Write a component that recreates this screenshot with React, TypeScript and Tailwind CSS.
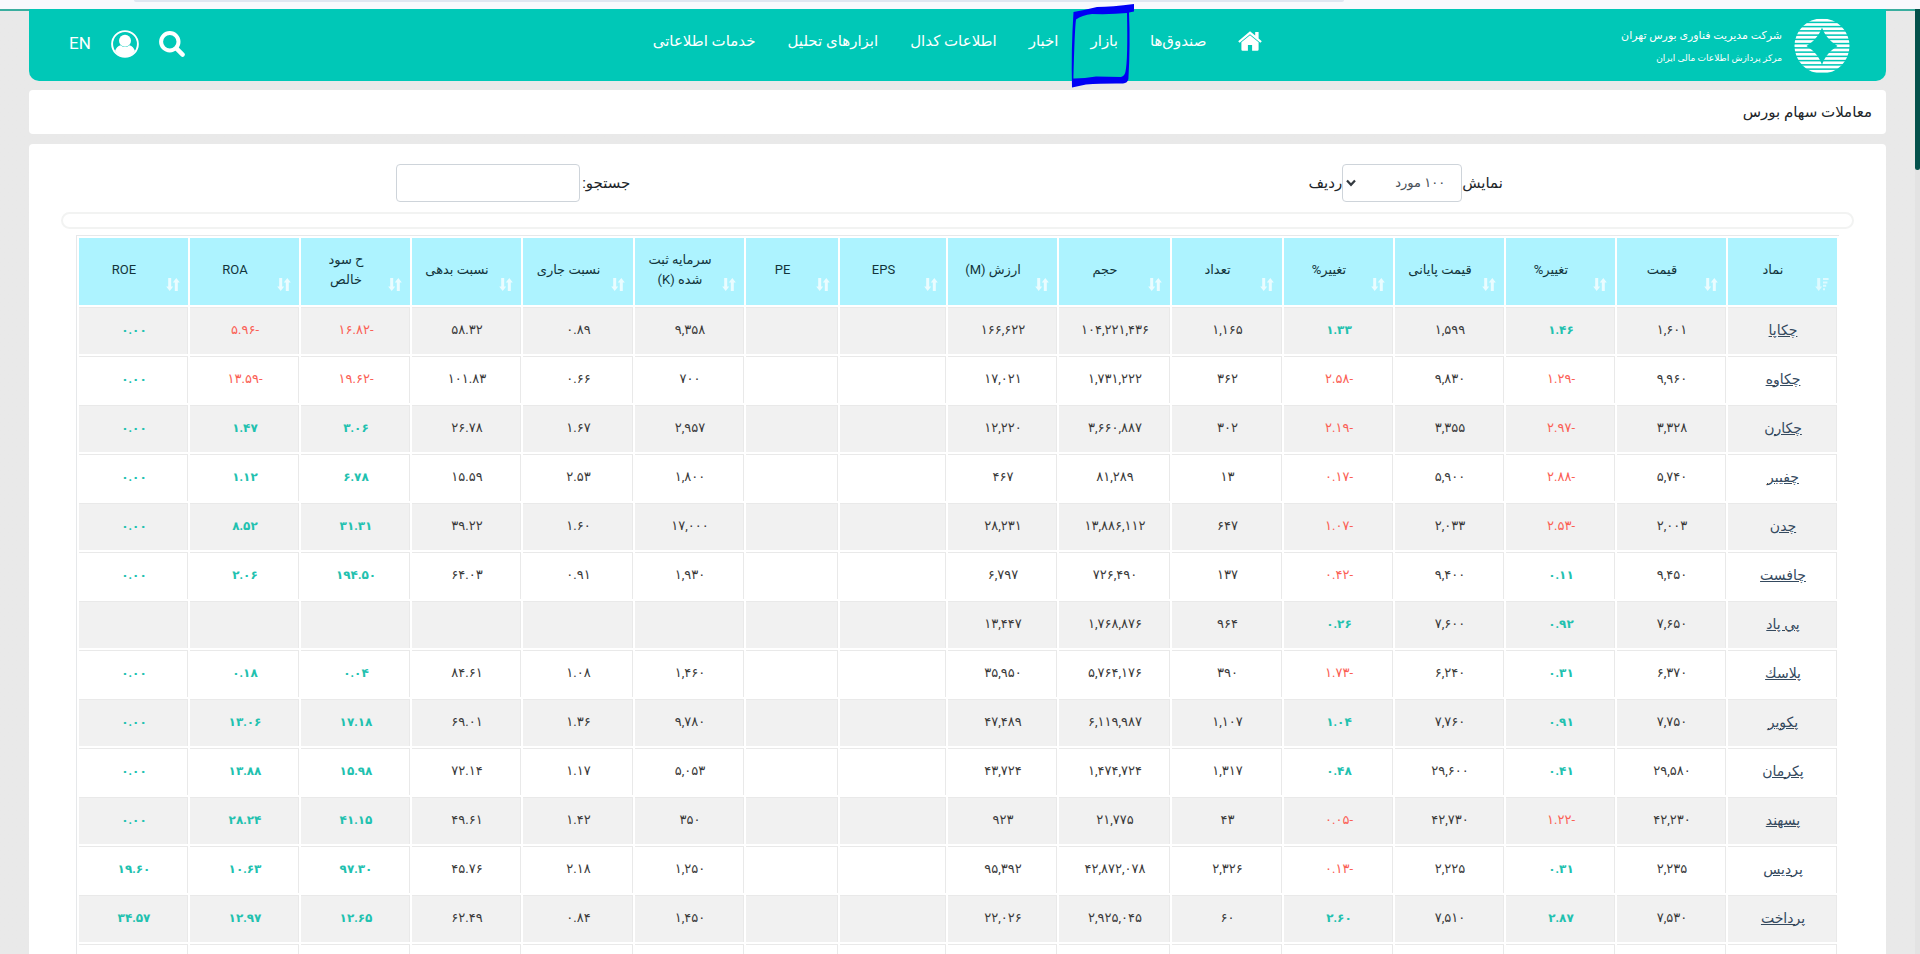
import React from "react";

type Column = { label: string; width: number };

const columns: Column[] = [
  { label: "نماد", width: 109 },
  { label: "قیمت", width: 109 },
  { label: "تغییر%", width: 109 },
  { label: "قیمت پایانی", width: 109 },
  { label: "تغییر%", width: 109 },
  { label: "تعداد", width: 110 },
  { label: "حجم", width: 111 },
  { label: "ارزش (M)", width: 109 },
  { label: "EPS", width: 106 },
  { label: "PE", width: 92 },
  { label: "سرمایه ثبت شده (K)", width: 109 },
  { label: "نسبت جاری", width: 110 },
  { label: "نسبت بدهی", width: 109 },
  { label: "ح سود خالص", width: 109 },
  { label: "ROA", width: 109 },
  { label: "ROE", width: 109 },
];

/** Columns whose values are coloured by sign. */
const signed = new Set([2, 4, 13, 14, 15]);

const rows: string[][] = [
  ["چکاپا", "۱,۶۰۱", "۱.۴۶", "۱,۵۹۹", "۱.۳۳", "۱,۱۶۵", "۱۰۴,۲۲۱,۴۳۶", "۱۶۶,۶۲۲", "", "", "۹,۳۵۸", "۰.۸۹", "۵۸.۳۲", "-۱۶.۸۲", "-۵.۹۶", "۰.۰۰"],
  ["چکاوه", "۹,۹۶۰", "-۱.۲۹", "۹,۸۳۰", "-۲.۵۸", "۳۶۲", "۱,۷۳۱,۲۲۲", "۱۷,۰۲۱", "", "", "۷۰۰", "۰.۶۶", "۱۰۱.۸۳", "-۱۹.۶۲", "-۱۳.۵۹", "۰.۰۰"],
  ["چکارن", "۳,۳۲۸", "-۲.۹۷", "۳,۳۵۵", "-۲.۱۹", "۳۰۲", "۳,۶۶۰,۸۸۷", "۱۲,۲۲۰", "", "", "۲,۹۵۷", "۱.۶۷", "۲۶.۷۸", "۳.۰۶", "۱.۴۷", "۰.۰۰"],
  ["چفیبر", "۵,۷۴۰", "-۲.۸۸", "۵,۹۰۰", "-۰.۱۷", "۱۳", "۸۱,۲۸۹", "۴۶۷", "", "", "۱,۸۰۰", "۲.۵۳", "۱۵.۵۹", "۶.۷۸", "۱.۱۲", "۰.۰۰"],
  ["چدن", "۲,۰۰۳", "-۲.۵۳", "۲,۰۳۳", "-۱.۰۷", "۶۴۷", "۱۳,۸۸۶,۱۱۲", "۲۸,۲۳۱", "", "", "۱۷,۰۰۰", "۱.۶۰", "۳۹.۲۲", "۳۱.۳۱", "۸.۵۲", "۰.۰۰"],
  ["چافست", "۹,۴۵۰", "۰.۱۱", "۹,۴۰۰", "-۰.۴۲", "۱۳۷", "۷۲۶,۴۹۰", "۶,۷۹۷", "", "", "۱,۹۳۰", "۰.۹۱", "۶۴.۰۳", "۱۹۴.۵۰", "۲.۰۶", "۰.۰۰"],
  ["پي پاد", "۷,۶۵۰", "۰.۹۲", "۷,۶۰۰", "۰.۲۶", "۹۶۴", "۱,۷۶۸,۸۷۶", "۱۳,۴۴۷", "", "", "", "", "", "", "", ""],
  ["پلاسك", "۶,۳۷۰", "۰.۳۱", "۶,۲۴۰", "-۱.۷۳", "۳۹۰", "۵,۷۶۴,۱۷۶", "۳۵,۹۵۰", "", "", "۱,۴۶۰", "۱.۰۸", "۸۴.۶۱", "۰.۰۴", "۰.۱۸", "۰.۰۰"],
  ["پکویر", "۷,۷۵۰", "۰.۹۱", "۷,۷۶۰", "۱.۰۴", "۱,۱۰۷", "۶,۱۱۹,۹۸۷", "۴۷,۴۸۹", "", "", "۹,۷۸۰", "۱.۳۶", "۶۹.۰۱", "۱۷.۱۸", "۱۳.۰۶", "۰.۰۰"],
  ["پکرمان", "۲۹,۵۸۰", "۰.۴۱", "۲۹,۶۰۰", "۰.۴۸", "۱,۳۱۷", "۱,۴۷۴,۷۲۴", "۴۳,۷۲۴", "", "", "۵,۰۵۳", "۱.۱۷", "۷۲.۱۴", "۱۵.۹۸", "۱۳.۸۸", "۰.۰۰"],
  ["پسهند", "۴۲,۲۳۰", "-۱.۲۲", "۴۲,۷۳۰", "-۰.۰۵", "۴۳", "۲۱,۷۷۵", "۹۲۳", "", "", "۳۵۰", "۱.۴۲", "۴۹.۶۱", "۴۱.۱۵", "۲۸.۲۴", "۰.۰۰"],
  ["پردیس", "۲,۲۳۵", "۰.۳۱", "۲,۲۲۵", "-۰.۱۳", "۲,۳۲۶", "۴۲,۸۷۲,۰۷۸", "۹۵,۳۹۲", "", "", "۱,۲۵۰", "۲.۱۸", "۴۵.۷۶", "۹۷.۳۰", "۱۰.۶۳", "۱۹.۶۰"],
  ["پرداخت", "۷,۵۳۰", "۲.۸۷", "۷,۵۱۰", "۲.۶۰", "۶۰", "۲,۹۲۵,۰۴۵", "۲۲,۰۲۶", "", "", "۱,۴۵۰", "۰.۸۴", "۶۲.۴۹", "۱۲.۶۵", "۱۲.۹۷", "۳۴.۵۷"],
  ["", "", "", "", "", "", "", "", "", "", "", "", "", "", "", ""],
];

const navItems = ["صندوق‌ها", "بازار", "اخبار", "اطلاعات کدال", "ابزارهای تحلیل", "خدمات اطلاعاتی"];

function Logo() {
  const stripes = Array.from({ length: 13 }, (_, i) => i);
  return (
    <svg viewBox="0 0 56 56" className="size-14 shrink-0" aria-hidden="true">
      <defs>
        <clipPath id="disc">
          <circle cx="28" cy="28" r="27.5" />
        </clipPath>
      </defs>
      <g clipPath="url(#disc)" fill="#fff">
        {stripes.map((i) => (
          <rect key={i} x="0" y={0.9 + i * 4.25} width="56" height="2.7" />
        ))}
      </g>
      <path d="M28 9.5 C31 18 36 23 43.5 28 C36 33 31 38 28 47 C25 38 20 33 12.5 28 C20 23 25 18 28 9.5Z" fill="#00c8b7" />
    </svg>
  );
}

function HomeIcon() {
  return (
    <svg viewBox="0 0 24 20" className="h-5 w-6" fill="#fff" aria-hidden="true">
      <path d="M12 0.3 L0.2 10.2 L1.6 11.8 L12 3.2 L22.4 11.8 L23.8 10.2 L20.6 7.5 V1 H17.2 V4.6 Z" />
      <path d="M12 4.2 L3.4 11.3 V18.6 Q3.4 19.8 4.6 19.8 H9.9 V14 H14.1 V19.8 H19.4 Q20.6 19.8 20.6 18.6 V11.3 Z" />
    </svg>
  );
}

function UserIcon() {
  return (
    <svg viewBox="0 0 28 28" className="size-7" aria-hidden="true">
      <circle cx="14" cy="14" r="12.9" fill="none" stroke="#fff" strokeWidth="1.9" />
      <path d="M4 21 Q5.5 16.2 9.6 15.2 Q14 19 18.4 15.2 Q22.5 16.2 24 21 Q20 27 14 27 Q8 27 4 21Z" fill="#fff" />
      <circle cx="14" cy="10.8" r="6" fill="#fff" />
    </svg>
  );
}

function SearchIcon() {
  return (
    <svg viewBox="0 0 26 26" className="size-[26px]" fill="none" stroke="#fff" aria-hidden="true">
      <circle cx="10.8" cy="10.8" r="8.7" strokeWidth="4" />
      <path d="M17.4 17.4 L23.6 23.6" strokeWidth="4.4" strokeLinecap="round" />
    </svg>
  );
}

function PenMark() {
  return (
    <svg
      viewBox="1067 -4 70 90"
      className="pointer-events-none absolute top-1/2 left-1/2 z-10 h-[90px] w-[70px] -translate-x-1/2 -translate-y-1/2 overflow-visible"
      aria-hidden="true"
    >
      <path
        fillRule="evenodd"
        fill="#0000f5"
        d="M1071.5 12 Q1083 10 1095 7 Q1110 7 1132 4 V11.5 L1127 12.6 Q1128.4 45 1126.4 79 Q1125.6 83 1121 83.6 Q1100 83.4 1084 84.4 L1070 87.4 Q1069 50 1071.5 12Z M1074 19.5 Q1072.6 30 1071.4 78.5 Q1082 78.6 1094 76.6 L1119 77 Q1122.6 76 1123.4 72 Q1126 60 1125 13 Q1110 14.6 1090 14 Q1080 15.4 1074 19.5Z"
      />
    </svg>
  );
}

function SortIcon({ active }: { active: boolean }) {
  return (
    <svg viewBox="0 0 14 15" className="absolute right-2 bottom-[13px] h-[15px] w-3.5" fill="#fff" fillOpacity={active ? 0.6 : 0.75} aria-hidden="true">
      <path d="M2.2 1 H5.2 V9.6 H7.2 L3.7 14 L0.2 9.6 H2.2Z" />
      {active ? (
        <path d="M8 1 H13.6 V3 H8Z M8 4.4 H12.4 V6.4 H8Z M8 7.8 H11.2 V9.8 H8Z M8 11.2 H10 V13.2 H8Z" />
      ) : (
        <path d="M8.8 14 H11.8 V5.4 H13.8 L10.3 1 L6.8 5.4 H8.8Z" />
      )}
    </svg>
  );
}

function cellStyle(column: number, value: string) {
  if (!signed.has(column)) return "text-[13px] text-[#3a3a3a]";
  return value.startsWith("-") ? "text-[13px] text-[#fb6055]" : "text-xs font-bold text-[#22c1af]";
}

function Header() {
  return (
    <header className="grid h-[72px] grid-cols-[1fr_auto_1fr] rounded-b-[10px] bg-[#00c8b7] px-9 text-white">
      <div className="flex items-center gap-3 pt-0.5">
        <Logo />
        <div className="flex flex-col gap-1 whitespace-nowrap">
          <span className="text-[11px] leading-5">شرکت مدیریت فناوری بورس تهران</span>
          <span className="text-[9px] leading-4">مرکز پردازش اطلاعات مالی ایران</span>
        </div>
      </div>
      <nav className="flex h-16 items-center">
        <ul className="flex items-center gap-8 text-[15px] leading-5 whitespace-nowrap">
          <li>
            <a href="#home" aria-label="خانه" className="block">
              <HomeIcon />
            </a>
          </li>
          {navItems.map((item) => (
            <li key={item} className="relative">
              <a href={"#" + item}>{item}</a>
              {item === "بازار" && <PenMark />}
            </li>
          ))}
        </ul>
      </nav>
      <div className="flex h-[70px] items-center justify-end gap-5 pl-1">
        <button type="button" aria-label="جستجو">
          <SearchIcon />
        </button>
        <button type="button" aria-label="حساب کاربری">
          <UserIcon />
        </button>
        <a href="#en" className="text-[17px]">
          EN
        </a>
      </div>
    </header>
  );
}

function Controls() {
  return (
    <div className="grid grid-cols-2 text-[15px] text-[#212529]">
      <div className="flex items-center justify-center">
        <label htmlFor="page-size">نمایش</label>
        <div className="relative">
          <select
            id="page-size"
            defaultValue="100"
            className="block h-[38px] w-[120px] appearance-none rounded border border-[#ced4da] bg-white pr-4 text-[13px] text-[#495057]"
          >
            <option value="100">۱۰۰ مورد</option>
          </select>
          <svg viewBox="0 0 10 8" className="pointer-events-none absolute top-[15px] left-1 h-2 w-2.5" fill="none" stroke="#343a40" strokeWidth="2.2" aria-hidden="true">
            <path d="M1 1.4 L5 5.8 L9 1.4" />
          </svg>
        </div>
        <span>ردیف</span>
      </div>
      <div className="flex items-center justify-center pl-2">
        <label htmlFor="table-search" className="pl-0.5">جستجو:</label>
        <input id="table-search" type="search" className="h-[38px] w-[184px] rounded border border-[#ced4da] bg-white px-3" />
      </div>
    </div>
  );
}

function StockTable() {
  return (
    <table className="w-full table-fixed border-separate border-spacing-[2px] border-t border-l border-[#e6e8ea] text-center">
      <colgroup>
        {columns.map((c, i) => (
          <col key={i} style={{ width: c.width }} />
        ))}
      </colgroup>
      <thead>
        <tr className="h-[67px]">
          {columns.map((c, i) => (
            <th key={i} scope="col" className="relative bg-[#adf3ff] pr-[30px] pb-1 pl-[11px] text-[13px] leading-5 font-normal text-[#12343b]">
              {c.label}
              <SortIcon active={i === 0} />
            </th>
          ))}
        </tr>
      </thead>
      <tbody>
        {rows.map((row, r) => (
          <tr key={r} className="h-[47px] odd:bg-[#f1f1f1] even:bg-white">
            {row.map((value, c) => (
              <td key={c} className={"border-t border-r border-[#e9e9e9] p-0 pb-0.5 pl-0.5 leading-5 " + cellStyle(c, value)}>
                {c === 0 && value ? (
                  <a href={"#" + value} className="text-sm text-[#34495e] underline">
                    {value}
                  </a>
                ) : (
                  value
                )}
              </td>
            ))}
          </tr>
        ))}
      </tbody>
    </table>
  );
}

export default function App() {
  return (
    <div dir="rtl" lang="fa" className="flex h-screen flex-col overflow-hidden bg-[#e9e9e9] font-['Roboto','DejaVu_Sans',sans-serif]">
      <div className="h-[9px] shrink-0 bg-[#f8f9fd] pr-[30%] pl-[7%]">
        <div className="h-0.5 rounded-b bg-[#dfe6f1]" />
      </div>
      <div className="flex min-h-0 flex-1">
        <div className="w-[5px] shrink-0 bg-[#e3e3e3]">
          <div className="h-[161px] rounded-b-sm bg-[#04514b]" />
        </div>
        <div className="min-w-0 flex-1 bg-linear-to-b from-[#3aae9f] from-[2px] to-[#e9e9e9] to-[2px] px-[29px]">
          <Header />
          <section className="mt-[9px] flex h-11 items-center rounded bg-white px-3.5">
            <h1 className="text-[15px] text-[#212529]">معاملات سهام بورس</h1>
          </section>
          <main className="mt-2.5 rounded-t bg-white pt-5">
            <div className="px-8">
              <Controls />
              <div className="mt-2.5 h-[17px] rounded-full border-2 border-[#f2f3f2]" />
            </div>
            <div className="mt-1.5 px-[47px]">
              <StockTable />
            </div>
          </main>
        </div>
      </div>
    </div>
  );
}
